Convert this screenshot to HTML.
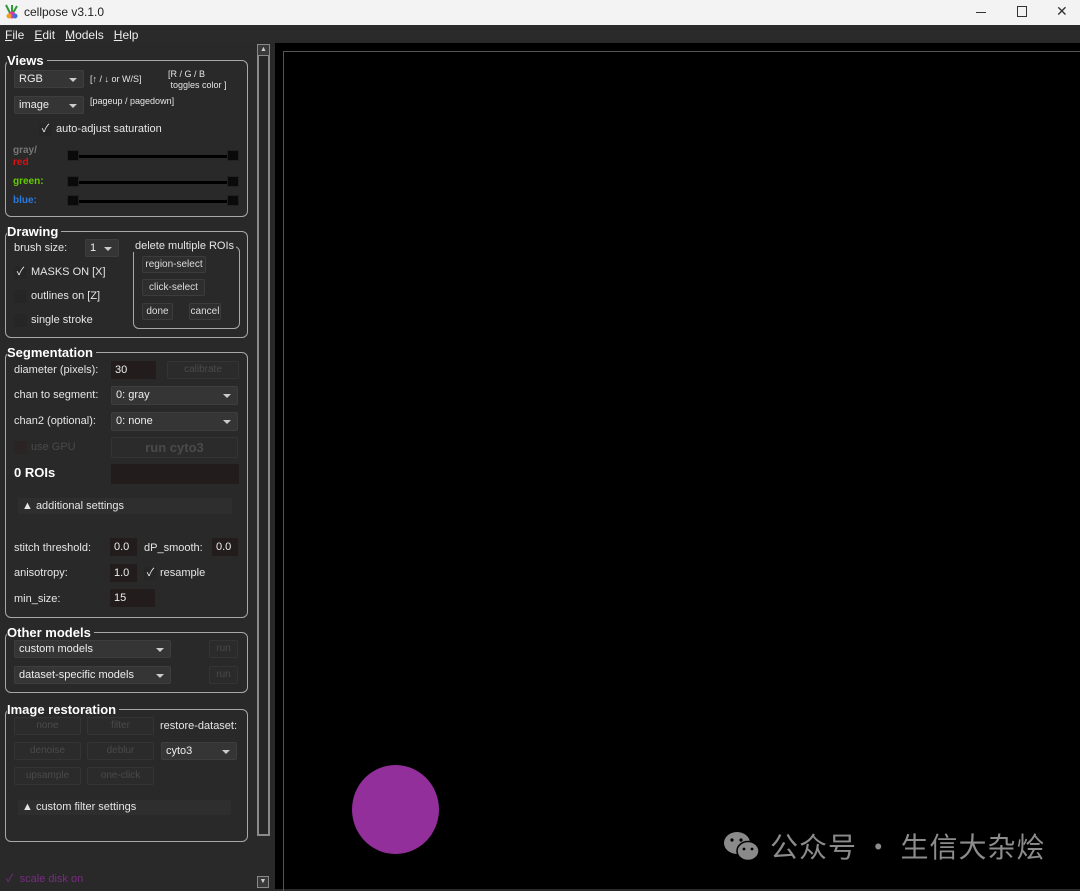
<!DOCTYPE html>
<html><head><meta charset="utf-8"><style>
*{box-sizing:border-box;margin:0;padding:0}
body{width:1080px;height:889px;background:#292929;font-family:"Liberation Sans","Noto Sans CJK SC",sans-serif;font-size:11px;color:#e6e6e6;position:relative;overflow:hidden}
.a{position:absolute;white-space:nowrap}
.grp{position:absolute;border:1px solid #a8a8a8;border-radius:6px}
.gt{position:absolute;background:#292929;font-weight:bold;font-size:13px;color:#fff;padding-right:3px;line-height:14px}
.cb{position:absolute;background:#353535;border:1px solid #3e3e3e;border-radius:2px;padding-left:4px;line-height:16px;color:#eee}
.cb:after{content:"";position:absolute;right:6px;top:7px;border-left:4px solid transparent;border-right:4px solid transparent;border-top:4px solid #ccc}
.bt{position:absolute;background:#2e2e2e;border:1px solid #3c3c3c;border-radius:2px;text-align:center;line-height:16px;color:#ddd;font-size:10px}
.dis{color:#4a4a4a;background:#2b2b2b;border-color:#343434}
.ed{position:absolute;background:#231c1c;padding-left:4px;line-height:18px;color:#eee}
.ck{position:absolute;width:13px;height:13px;background:#262626;border-radius:2px;color:#eee;font-size:11px;line-height:13px;text-align:center}
.sl{position:absolute;height:3px;background:#000}
.hd{position:absolute;width:12px;height:11px;background:#0a0a0a;border:1px solid #222}
</style></head><body>
<div class="a" style="left:0;top:0;width:1080px;height:25px;background:#f3f3f3"></div>
<svg class="a" style="left:4px;top:4px" width="16" height="16" viewBox="0 0 16 16"><path d="M2 1 L6 9 M8 1 L8 9 M13 2 L9 9" stroke="#2a9a3a" stroke-width="2"/><circle cx="8" cy="11" r="3.5" fill="#e23aa0"/><circle cx="5" cy="12" r="2.5" fill="#f0a020"/><circle cx="11" cy="12" r="2.5" fill="#3a70e0"/></svg>
<div class="a" style="left:24px;top:5px;font-size:12px;color:#222">cellpose v3.1.0</div>
<div class="a" style="left:976px;top:12px;width:10px;height:1px;background:#333"></div>
<div class="a" style="left:1017px;top:6px;width:10px;height:11px;border:1px solid #333"></div>
<div class="a" style="left:1056px;top:3px;font-size:14px;color:#333">✕</div>
<div class="a" style="left:0;top:25px;width:1080px;height:18px;background:#2a2a2a"></div>
<div class="a" style="left:5px;top:28px;font-size:12px;color:#eee"><u>F</u>ile&nbsp;&nbsp; <u>E</u>dit&nbsp;&nbsp; <u>M</u>odels&nbsp;&nbsp; <u>H</u>elp</div>
<div class="a" style="left:275px;top:43px;width:805px;height:846px;background:#000"></div>
<div class="a" style="left:283px;top:51px;width:797px;height:840px;border:1px solid #555;border-right:none;border-bottom:none"></div>
<div class="a" style="left:352px;top:765px;width:87px;height:89px;border-radius:50%;background:#922f9b"></div>
<div class="a" style="left:257px;top:44px;width:13px;height:792px;border:2px solid #8a8a8a;background:#262626"></div>
<div class="a" style="left:257px;top:44px;width:13px;height:12px;background:#3a3a3a;border:1px solid #888;font-size:7px;text-align:center;line-height:10px;color:#ccc">▲</div>
<div class="a" style="left:257px;top:876px;width:12px;height:12px;background:#3a3a3a;border:1px solid #888;font-size:7px;text-align:center;line-height:10px;color:#ccc">▼</div>

<div class="grp" style="left:5px;top:60px;width:243px;height:157px"></div>
<div class="gt" style="left:7px;top:54px">Views</div>
<div class="cb" style="left:14px;top:70px;width:70px;height:18px">RGB</div>
<div class="a" style="left:90px;top:74px;font-size:9px">[↑ / ↓ or W/S]</div>
<div class="a" style="left:168px;top:69px;font-size:9px;line-height:11px">[R / G / B<br>&nbsp;toggles color ]</div>
<div class="cb" style="left:14px;top:96px;width:70px;height:18px">image</div>
<div class="a" style="left:90px;top:96px;font-size:9px">[pageup / pagedown]</div>
<div class="ck" style="left:39px;top:123px">✓</div>
<div class="a" style="left:56px;top:123px">auto-adjust saturation</div>
<div class="a" style="left:13px;top:145px;font-size:10px;font-weight:bold;color:#777;line-height:12px">gray/<br><span style="color:#d11">red</span></div>
<div class="sl" style="left:70px;top:155px;width:166px"></div><div class="hd" style="left:67px;top:150px"></div><div class="hd" style="left:227px;top:150px"></div>
<div class="a" style="left:13px;top:176px;font-size:10px;font-weight:bold;color:#6c0">green:</div>
<div class="sl" style="left:70px;top:181px;width:166px"></div><div class="hd" style="left:67px;top:176px"></div><div class="hd" style="left:227px;top:176px"></div>
<div class="a" style="left:13px;top:195px;font-size:10px;font-weight:bold;color:#2a7ae0">blue:</div>
<div class="sl" style="left:70px;top:200px;width:166px"></div><div class="hd" style="left:67px;top:195px"></div><div class="hd" style="left:227px;top:195px"></div>

<div class="grp" style="left:5px;top:231px;width:243px;height:107px"></div>
<div class="gt" style="left:7px;top:225px">Drawing</div>
<div class="a" style="left:14px;top:242px">brush size:</div>
<div class="cb" style="left:85px;top:239px;width:34px;height:18px">1</div>
<div class="grp" style="left:133px;top:246px;width:107px;height:83px"></div>
<div class="a" style="left:133px;top:240px;background:#292929;padding:0 2px">delete multiple ROIs</div>
<div class="bt" style="left:142px;top:256px;width:64px;height:17px">region-select</div>
<div class="bt" style="left:142px;top:279px;width:63px;height:17px">click-select</div>
<div class="bt" style="left:142px;top:303px;width:31px;height:17px">done</div>
<div class="bt" style="left:189px;top:303px;width:32px;height:17px">cancel</div>
<div class="ck" style="left:14px;top:266px">✓</div><div class="a" style="left:31px;top:266px">MASKS ON [X]</div>
<div class="ck" style="left:14px;top:290px"></div><div class="a" style="left:31px;top:290px">outlines on [Z]</div>
<div class="ck" style="left:14px;top:314px"></div><div class="a" style="left:31px;top:314px">single stroke</div>

<div class="grp" style="left:5px;top:352px;width:243px;height:266px"></div>
<div class="gt" style="left:7px;top:346px">Segmentation</div>
<div class="a" style="left:14px;top:364px">diameter (pixels):</div>
<div class="ed" style="left:111px;top:361px;width:45px">30</div>
<div class="bt dis" style="left:167px;top:361px;width:72px;height:18px">calibrate</div>
<div class="a" style="left:14px;top:389px">chan to segment:</div>
<div class="cb" style="left:111px;top:386px;width:127px;height:19px">0: gray</div>
<div class="a" style="left:14px;top:415px">chan2 (optional):</div>
<div class="cb" style="left:111px;top:412px;width:127px;height:19px">0: none</div>
<div class="ck" style="left:14px;top:441px;background:#2b2424"></div><div class="a" style="left:31px;top:441px;color:#4a4a4a">use GPU</div>
<div class="bt dis" style="left:111px;top:437px;width:127px;height:21px;font-size:13px;font-weight:bold;line-height:19px">run cyto3</div>
<div class="a" style="left:14px;top:465px;font-size:13px;font-weight:bold;color:#fff">0 ROIs</div>
<div class="a" style="left:111px;top:464px;width:128px;height:20px;background:#231c1c"></div>
<div class="a" style="left:18px;top:498px;width:214px;height:16px;background:#2e2e2e;padding-left:4px;line-height:16px">▲ additional settings</div>
<div class="a" style="left:14px;top:542px">stitch threshold:</div>
<div class="ed" style="left:110px;top:538px;width:27px">0.0</div>
<div class="a" style="left:144px;top:542px">dP_smooth:</div>
<div class="ed" style="left:212px;top:538px;width:26px">0.0</div>
<div class="a" style="left:14px;top:567px">anisotropy:</div>
<div class="ed" style="left:110px;top:564px;width:27px">1.0</div>
<div class="ck" style="left:144px;top:567px">✓</div><div class="a" style="left:160px;top:567px">resample</div>
<div class="a" style="left:14px;top:593px">min_size:</div>
<div class="ed" style="left:110px;top:589px;width:45px">15</div>

<div class="grp" style="left:5px;top:632px;width:243px;height:61px"></div>
<div class="gt" style="left:7px;top:626px">Other models</div>
<div class="cb" style="left:14px;top:640px;width:157px;height:18px">custom models</div>
<div class="bt dis" style="left:209px;top:640px;width:29px;height:18px">run</div>
<div class="cb" style="left:14px;top:666px;width:157px;height:18px">dataset-specific models</div>
<div class="bt dis" style="left:209px;top:666px;width:29px;height:18px">run</div>

<div class="grp" style="left:5px;top:709px;width:243px;height:133px"></div>
<div class="gt" style="left:7px;top:703px">Image restoration</div>
<div class="bt dis" style="left:14px;top:717px;width:67px;height:18px">none</div>
<div class="bt dis" style="left:87px;top:717px;width:67px;height:18px">filter</div>
<div class="a" style="left:160px;top:720px">restore-dataset:</div>
<div class="bt dis" style="left:14px;top:742px;width:67px;height:18px">denoise</div>
<div class="bt dis" style="left:87px;top:742px;width:67px;height:18px">deblur</div>
<div class="cb" style="left:161px;top:742px;width:76px;height:18px">cyto3</div>
<div class="bt dis" style="left:14px;top:767px;width:67px;height:18px">upsample</div>
<div class="bt dis" style="left:87px;top:767px;width:67px;height:18px">one-click</div>
<div class="a" style="left:18px;top:800px;width:213px;height:15px;background:#2e2e2e;padding-left:4px;line-height:15px">▲ custom filter settings</div>

<div class="a" style="left:6px;top:870px;color:#7a2a85">✓ &nbsp;scale disk on</div>

<svg class="a" style="left:722px;top:830px" width="40" height="34" viewBox="0 0 40 34"><ellipse cx="15" cy="13" rx="13" ry="11" fill="#8a8a8a"/><ellipse cx="26" cy="21" rx="11" ry="9.5" fill="#8a8a8a" stroke="#000" stroke-width="1.5"/><circle cx="10" cy="10" r="1.6" fill="#000"/><circle cx="19" cy="10" r="1.6" fill="#000"/><circle cx="22" cy="19" r="1.4" fill="#000"/><circle cx="30" cy="19" r="1.4" fill="#000"/></svg>
<div class="a" style="left:770px;top:828px;font-size:28px;letter-spacing:1px;color:#8c8c8c;font-family:'Noto Sans CJK SC',sans-serif;line-height:36px">公众号 · 生信大杂烩</div>
</body></html>
